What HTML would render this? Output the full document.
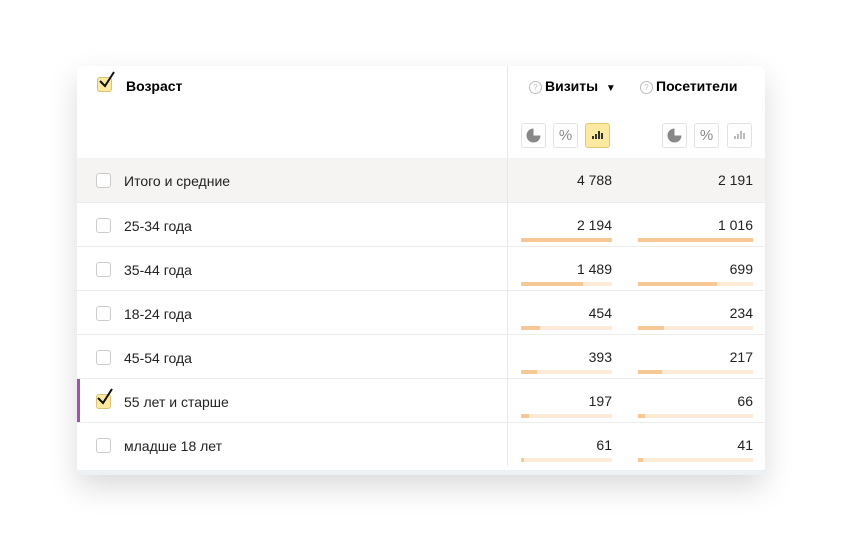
<!DOCTYPE html>
<html><head><meta charset="utf-8"><style>
body{margin:0;width:842px;height:544px;background:#fff;font-family:"Liberation Sans",sans-serif;position:relative;overflow:hidden}
.card{position:absolute;left:77px;top:66px;width:688px;height:404px;background:#fff;border-radius:6px;box-shadow:0 12px 30px rgba(0,0,0,.15);overflow:hidden;border-bottom:5px solid #edf0f4}
.vd{position:absolute;left:430px;top:0;width:1px;height:400px;background:#e8e8e8;z-index:5}
.row{position:absolute;left:0;width:688px;height:44px;border-top:1px solid #ececec;font-size:14px;color:#222}
.row .cb{position:absolute;left:19px;top:15px;width:13px;height:13px;border:1px solid #ccc;border-radius:3px;background:#fff}
.row .lbl{position:absolute;left:47px;top:15px}
.n1,.n2{position:absolute;top:14px;text-align:right}
.n1{right:153px}.n2{right:12px}
.b{position:absolute;top:35px;height:4px;background:#fdebd8}
.b i{display:block;height:4px;background:#f6c894}
.b1{left:444px;width:91px}.b2{left:561px;width:115px}
.ibtn{position:absolute;top:57px;width:25px;height:25px;border:1px solid #e2e2e2;border-radius:3px;background:#fff;box-sizing:border-box}
.q{display:inline-block;width:11px;height:11px;border:1px solid #bbb;border-radius:50%;font-size:8px;color:#bbb;text-align:center;line-height:11px;font-weight:normal;vertical-align:1px;margin-right:3px}
.chk{position:absolute;width:13px;height:13px;border:1px solid #d8c27a;border-radius:3px;background:#fde9a0}
</style></head><body>
<div class="card">
<div class="vd"></div>
<div class="chk" style="left:20px;top:11px"></div>
<svg style="position:absolute;left:21px;top:4px" width="18" height="20"><path d="M2 11 L7 16 L16 2" fill="none" stroke="#111" stroke-width="2"/></svg>
<div style="position:absolute;left:49px;top:12px;font-weight:bold;font-size:14px">Возраст</div>
<div style="position:absolute;left:452px;top:12px;font-weight:bold;font-size:14px"><span class="q">?</span>Визиты&nbsp; <span style="font-size:10px">▼</span></div>
<div style="position:absolute;left:563px;top:12px;font-weight:bold;font-size:14px"><span class="q">?</span>Посетители</div>
<div class="ibtn" style="left:444px"><svg width="23" height="23"><circle cx="11.5" cy="11.5" r="7" fill="#888"/><path d="M11.5 11.5V4A7.5 7.5 0 0 1 19 11.5Z" fill="#fff"/></svg></div>
<div class="ibtn" style="left:476px;font-size:15px;color:#888;text-align:center;line-height:23px">%</div>
<div class="ibtn" style="left:508px;background:#fde9a0;border-color:#e0c870"><svg width="23" height="23"><g fill="#333"><rect x="6" y="12" width="2" height="3"/><rect x="9" y="10" width="2" height="5"/><rect x="12" y="7" width="2" height="8"/><rect x="15" y="9" width="2" height="6"/></g></svg></div>
<div class="ibtn" style="left:585px"><svg width="23" height="23"><circle cx="11.5" cy="11.5" r="7" fill="#888"/><path d="M11.5 11.5V4A7.5 7.5 0 0 1 19 11.5Z" fill="#fff"/></svg></div>
<div class="ibtn" style="left:617px;font-size:15px;color:#888;text-align:center;line-height:23px">%</div>
<div class="ibtn" style="left:650px"><svg width="23" height="23"><g fill="#bbb"><rect x="6" y="12" width="2" height="3"/><rect x="9" y="10" width="2" height="5"/><rect x="12" y="7" width="2" height="8"/><rect x="15" y="9" width="2" height="6"/></g></svg></div>

<div class="row" style="top:92px;background:#f5f4f2;border-top:none"><div class="cb"></div><div class="lbl">Итого и средние</div><div class="n1">4 788</div><div class="n2">2 191</div></div>
<div class="row" style="top:136px"><div class="cb"></div><div class="lbl">25-34 года</div><div class="n1">2 194</div><div class="n2">1 016</div><div class="b b1"><i style="width:100%"></i></div><div class="b b2"><i style="width:100%"></i></div></div>
<div class="row" style="top:180px"><div class="cb"></div><div class="lbl">35-44 года</div><div class="n1">1 489</div><div class="n2">699</div><div class="b b1"><i style="width:68%"></i></div><div class="b b2"><i style="width:69%"></i></div></div>
<div class="row" style="top:224px"><div class="cb"></div><div class="lbl">18-24 года</div><div class="n1">454</div><div class="n2">234</div><div class="b b1"><i style="width:21%"></i></div><div class="b b2"><i style="width:23%"></i></div></div>
<div class="row" style="top:268px"><div class="cb"></div><div class="lbl">45-54 года</div><div class="n1">393</div><div class="n2">217</div><div class="b b1"><i style="width:18%"></i></div><div class="b b2"><i style="width:21%"></i></div></div>
<div class="row" style="top:312px"><div style="position:absolute;left:0;top:0;width:3px;height:44px;background:#a34fb5"></div><div class="chk" style="left:19px;top:15px"></div><svg style="position:absolute;left:19px;top:8px" width="18" height="20"><path d="M2 11 L7 16 L16 2" fill="none" stroke="#111" stroke-width="2"/></svg><div class="lbl">55 лет и старше</div><div class="n1">197</div><div class="n2">66</div><div class="b b1"><i style="width:9%"></i></div><div class="b b2"><i style="width:6%"></i></div></div>
<div class="row" style="top:356px"><div class="cb"></div><div class="lbl">младше 18 лет</div><div class="n1">61</div><div class="n2">41</div><div class="b b1"><i style="width:3%"></i></div><div class="b b2"><i style="width:4%"></i></div></div>
</div>
</body></html>
